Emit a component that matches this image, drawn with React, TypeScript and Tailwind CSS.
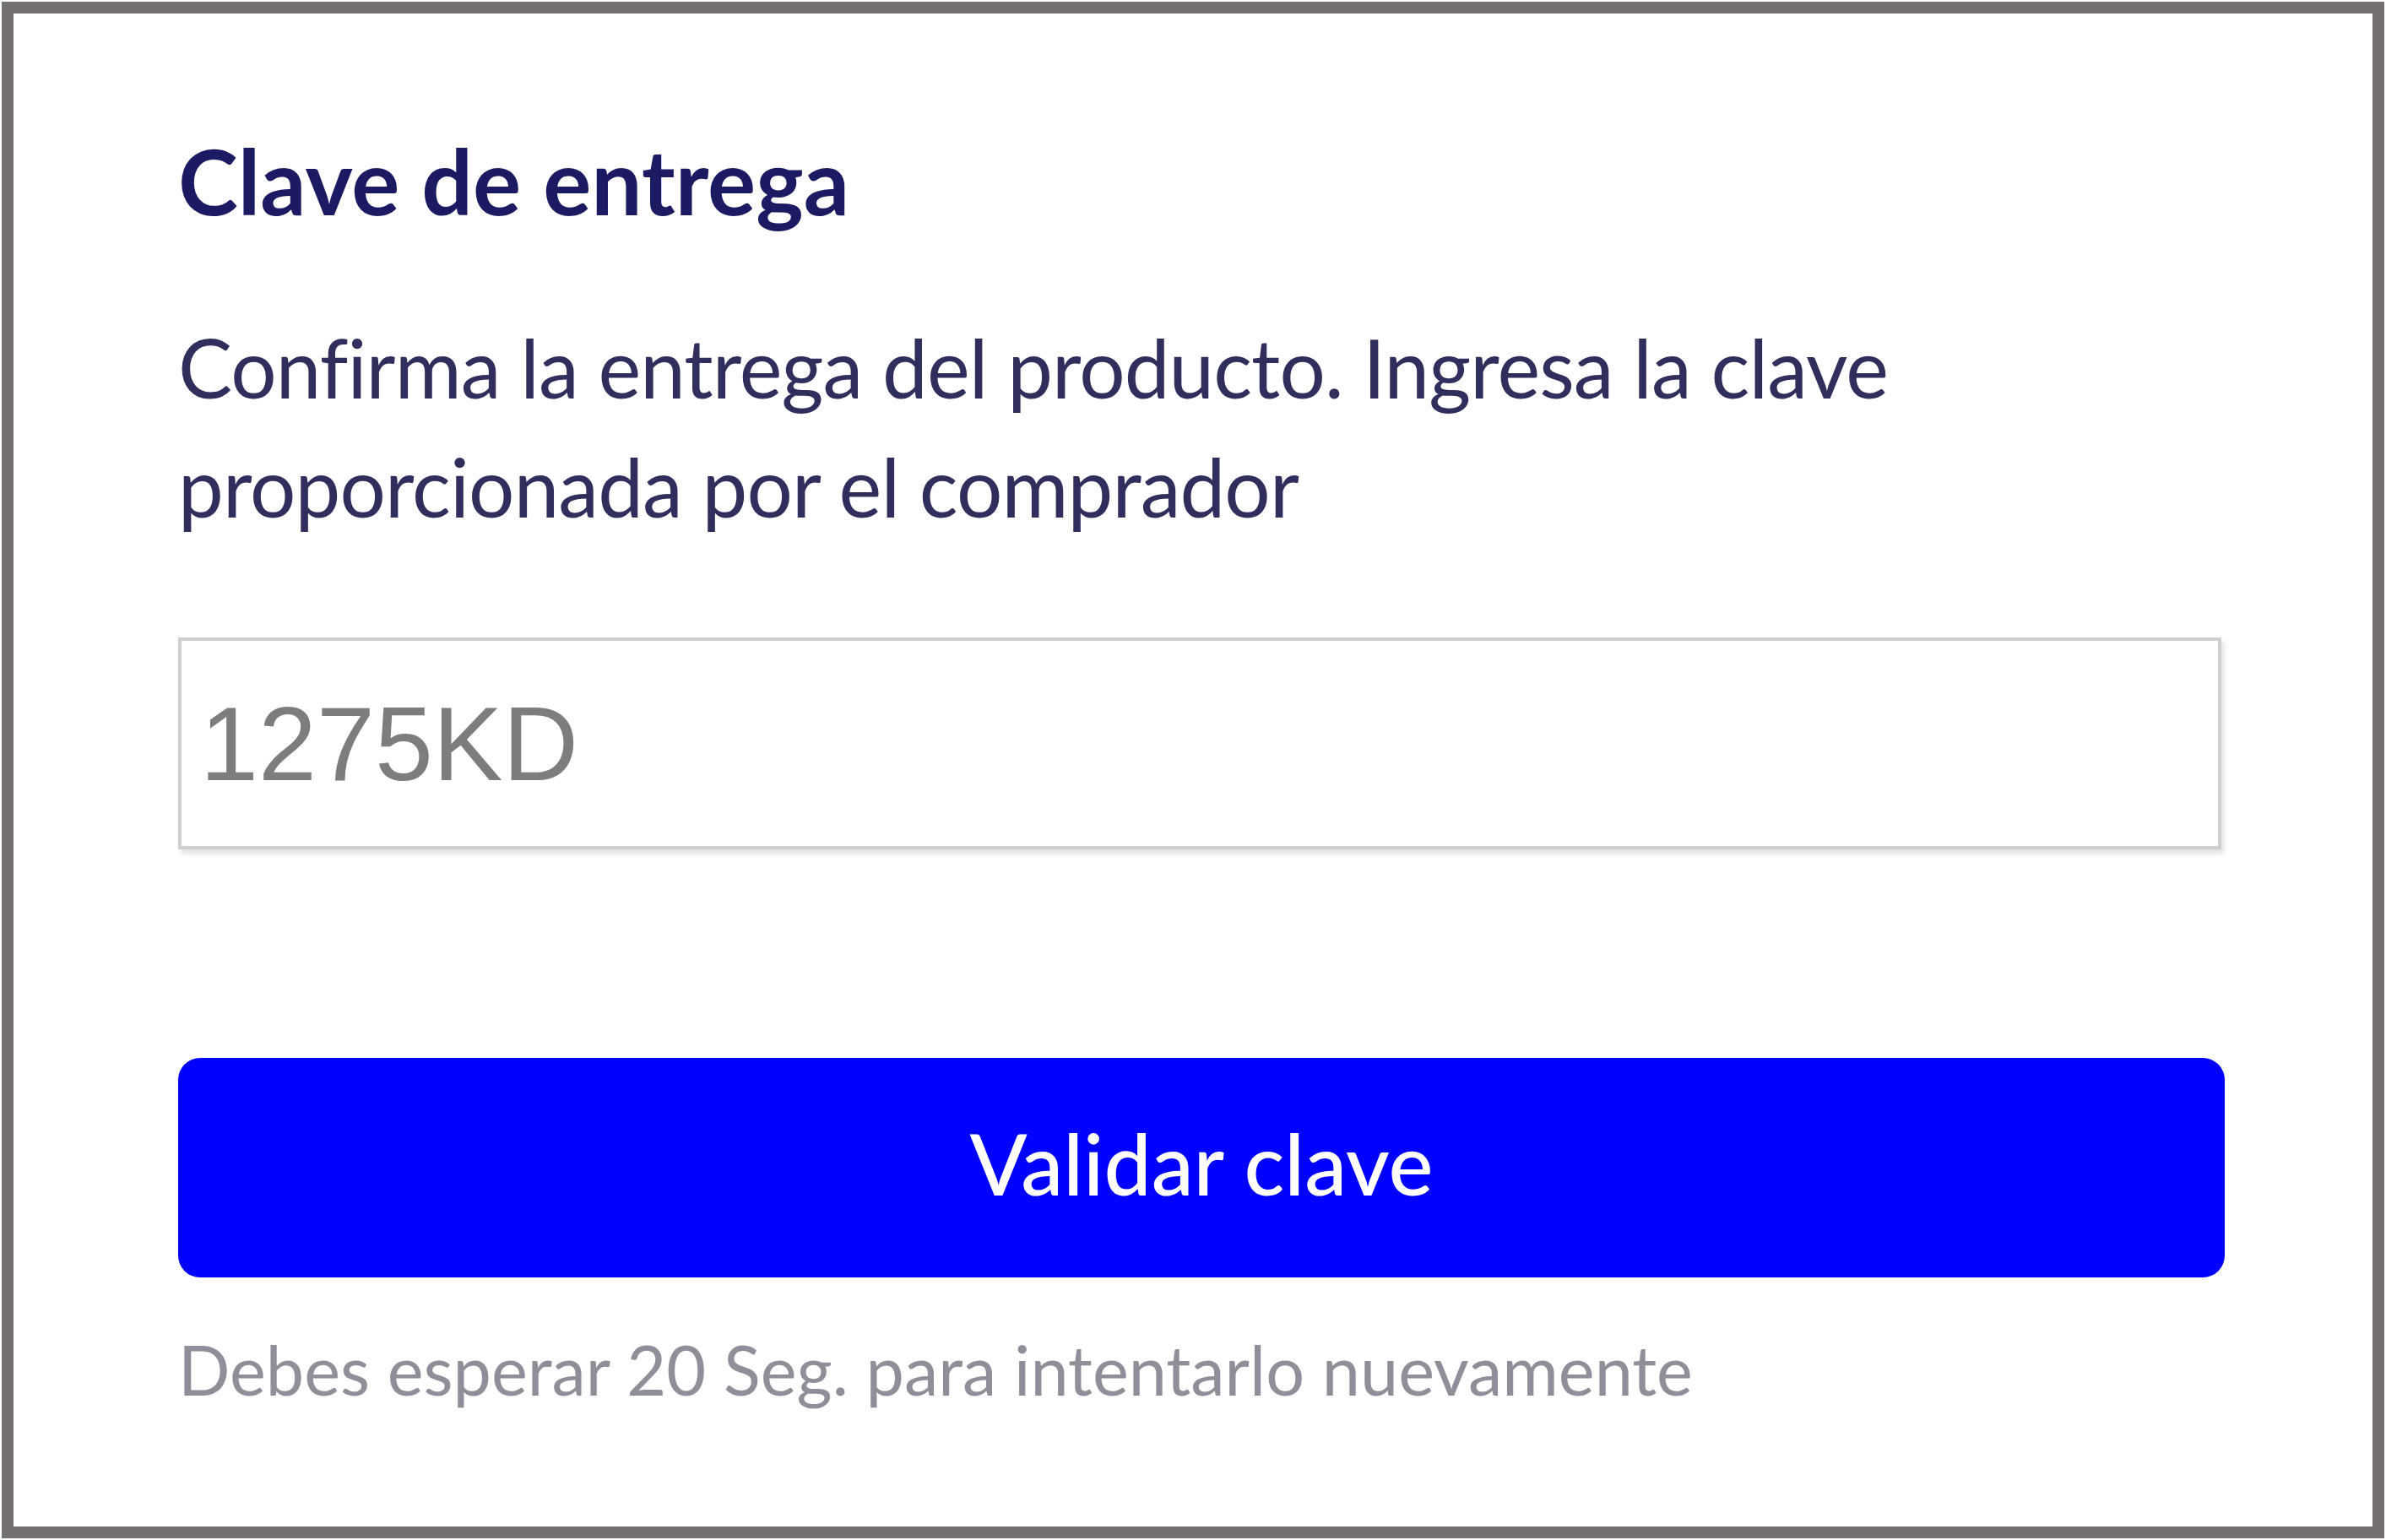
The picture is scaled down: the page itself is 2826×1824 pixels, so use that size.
export default function App() {
  return (
    <div className="w-[2826px] h-[1824px] bg-white p-[2px]">
      <div className="w-full h-full border-[14px] border-[#747070] bg-white pl-[195px] pr-[176px] font-['Lato',sans-serif]">
        <div className="flex flex-col w-[2424px]">
          <h1 className="mt-[134px] text-[107px] leading-[1.2] font-bold text-[#1b1a63]">
            Clave de entrega
          </h1>
          <p className="mt-[86px] text-[96px] leading-[141px] tracking-[-0.9px] text-[#2f2e5c]">
            Confirma la entrega del producto. Ingresa la clave
            <br />
            proporcionada por el comprador
          </p>
          <input
            readOnly
            defaultValue="1275KD"
            className="mt-[109px] h-[251px] w-[2420px] border-[4px] border-[#cfcfcf] bg-white pl-[22px] text-[124px] text-[#7f7c7d] font-['Liberation_Sans',Arial,sans-serif] shadow-[3px_5px_6px_rgba(0,0,0,0.12)] outline-none"
          />
          <button className="mt-[247px] h-[260px] w-[2424px] rounded-[26px] bg-[#0000ff] pb-[12px] text-white text-[100px] font-medium leading-none">
            Validar clave
          </button>
          <p className="mt-[60px] text-[81px] leading-[1.2] text-[#8f8f99]">
            Debes esperar 20 Seg. para intentarlo nuevamente
          </p>
        </div>
      </div>
    </div>
  );
}
